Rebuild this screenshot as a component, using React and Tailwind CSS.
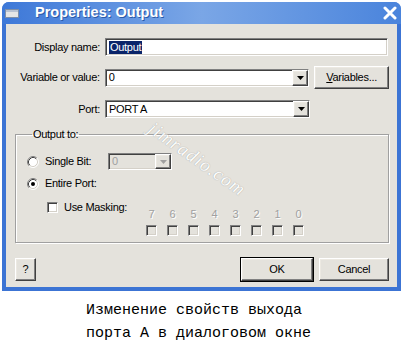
import React from 'react'

const sunken =
  'border border-t-[#808080] border-l-[#808080] border-b-white border-r-white shadow-[inset_1px_1px_0_#404040,inset_-1px_-1px_0_#d4d0c8]'
const raised =
  'border border-t-white border-l-white border-b-[#404040] border-r-[#404040] shadow-[inset_-1px_-1px_0_#808080,inset_1px_1px_0_#ece9e2]'

const Arrow = ({ disabled }) => (
  <div className={`w-[16px] h-full flex items-center justify-center bg-[#e4e2dc] ${raised}`}>
    <svg width="7" height="4" viewBox="0 0 7 4">
      <path d="M0 0 H7 L3.5 4 Z" fill={disabled ? '#a0a0a0' : '#000'} />
    </svg>
  </div>
)

const Combo = ({ value, className, disabled }) => (
  <div className={`flex items-stretch ${sunken} ${disabled ? 'bg-[#e4e2dc] text-[#a0a0a0]' : 'bg-white'} ${className}`}>
    <span className="flex-1 pl-[3px] flex items-center">{value}</span>
    <Arrow disabled={disabled} />
  </div>
)

const Radio = ({ checked }) => (
  <svg width="12" height="12" viewBox="0 0 12 12">
    <circle cx="6" cy="6" r="5" fill="#fff" />
    <path d="M2.11 9.89 A5.5 5.5 0 0 1 9.89 2.11" fill="none" stroke="#808080" />
    <path d="M2.82 9.18 A4.5 4.5 0 0 1 9.18 2.82" fill="none" stroke="#404040" />
    <path d="M9.89 2.11 A5.5 5.5 0 0 1 2.11 9.89" fill="none" stroke="#fff" />
    <path d="M9.18 2.82 A4.5 4.5 0 0 1 2.82 9.18" fill="none" stroke="#d4d0c8" />
    {checked && <circle cx="6" cy="6" r="2" fill="#000" />}
  </svg>
)

const Check = ({ disabled }) => (
  <div className={`w-[11px] h-[11px] ${sunken} ${disabled ? 'bg-[#e4e2dc]' : 'bg-white'}`} />
)

const Button = ({ children, className }) => (
  <button className={`h-[23px] flex items-center justify-center bg-[#e4e2dc] ${raised} ${className}`}>
    {children}
  </button>
)

const bits = [7, 6, 5, 4, 3, 2, 1, 0]

export default function App() {
  return (
    <div className="w-[405px] h-[342px] bg-white relative overflow-hidden font-['Liberation_Sans',Arial,sans-serif] text-[11px] tracking-[-0.3px] text-black">
      <div className="ml-[2px] mt-[2px] w-[399px] rounded-t-[7px] bg-[#3c74d4] px-[4px] pb-[4px] flex flex-col">
        {/* title bar */}
        <div className="h-[22px] -mx-[4px] px-[3px] rounded-t-[7px] flex items-center bg-gradient-to-r from-[#3d78d8] via-[#7aa6e6] to-[#4a84dc]">
          <div className="w-[14px] h-[9px] bg-[#e6e6e6] border border-[#7d8ea8] shadow-[inset_0_2px_0_#b9c3d3]" />
          <span className="ml-[16px] text-white font-bold text-[14.5px] tracking-normal [text-shadow:1px_1px_0_#2a5aa8]">
            Properties: Output
          </span>
          <svg className="ml-auto mr-[1px]" width="14" height="14" viewBox="0 0 14 14">
            <path d="M2 2 L12 12 M12 2 L2 12" stroke="#fff" strokeWidth="3" strokeLinecap="round" />
          </svg>
        </div>

        {/* body */}
        <div className="h-[263px] bg-[#e4e2dc] flex flex-col pl-[9px] pr-[8px]">
          <div className="flex items-center mt-[14px] -ml-[9px]">
            <span className="w-[94px] text-right">Display name:</span>
            <div className={`ml-[5px] w-[283px] h-[18px] bg-white flex items-center pl-[3px] ${sunken}`}>
              <span className="bg-[#0a246a] text-white px-[1px] leading-[13px]">Output</span>
            </div>
          </div>

          <div className="flex items-center mt-[10px] -ml-[9px]">
            <span className="w-[94px] text-right">Variable or value:</span>
            <Combo value="0" className="ml-[5px] w-[205px] h-[18px]" />
            <Button className="ml-[5px] w-[75px] h-[18px]">
              <span><span className="underline">V</span>ariables...</span>
            </Button>
          </div>

          <div className="flex items-center mt-[11px] -ml-[9px]">
            <span className="w-[94px] text-right">Port:</span>
            <Combo value="PORT A" className="ml-[5px] w-[205px] h-[18px]" />
          </div>

          {/* group box */}
          <fieldset className="mt-[10px] border border-[#a0a0a0] shadow-[1px_1px_0_#fff,inset_1px_1px_0_#fff] pl-[11px] pb-[6px]">
            <legend className="ml-[5px] px-[1px] leading-[13px]">Output to:</legend>

            <div className="flex items-center h-[17px] mt-[12px]">
              <Radio />
              <span className="ml-[6px] w-[63px]">Single Bit:</span>
              <Combo value="0" disabled className="w-[64px] h-[17px]" />
            </div>

            <div className="flex items-center h-[17px] mt-[5px]">
              <Radio checked />
              <span className="ml-[6px]">Entire Port:</span>
            </div>

            <div className="flex items-start mt-[9px] pl-[20px]">
              <div className="flex items-center h-[12px]">
                <Check />
                <span className="ml-[6px] w-[77px]">Use Masking:</span>
              </div>
              <div className="flex mt-[7px]">
                {bits.map((b) => (
                  <div key={b} className="w-[21px] flex flex-col items-center">
                    <span className="leading-[13px] text-[#a0a0a0] [text-shadow:1px_1px_0_#fff]">{b}</span>
                    <div className="mt-[4px]">
                      <Check disabled />
                    </div>
                  </div>
                ))}
              </div>
            </div>
          </fieldset>

          {/* buttons */}
          <div className="flex items-center mt-[15px]">
            <Button className="w-[21px]">?</Button>
            <Button className="ml-auto w-[72px] ring-1 ring-black">OK</Button>
            <Button className="ml-[6px] w-[70px]">Cancel</Button>
          </div>
        </div>
      </div>

      {/* watermark */}
      <span className="absolute left-[140px] top-[145px] rotate-[35deg] font-['Liberation_Serif',serif] italic text-[19px] tracking-[1px] text-white [text-shadow:0_0_1px_#8a8a8a] opacity-90">
        jimradio.com
      </span>

      {/* caption */}
      <div className="mt-[10px] pl-[86px] font-['Liberation_Mono',monospace] text-[15px] tracking-normal">
        <div className="leading-[20px]">Изменение свойств выхода</div>
        <div className="mt-[5px] leading-[16px]">порта А в диалоговом окне</div>
      </div>
    </div>
  )
}
